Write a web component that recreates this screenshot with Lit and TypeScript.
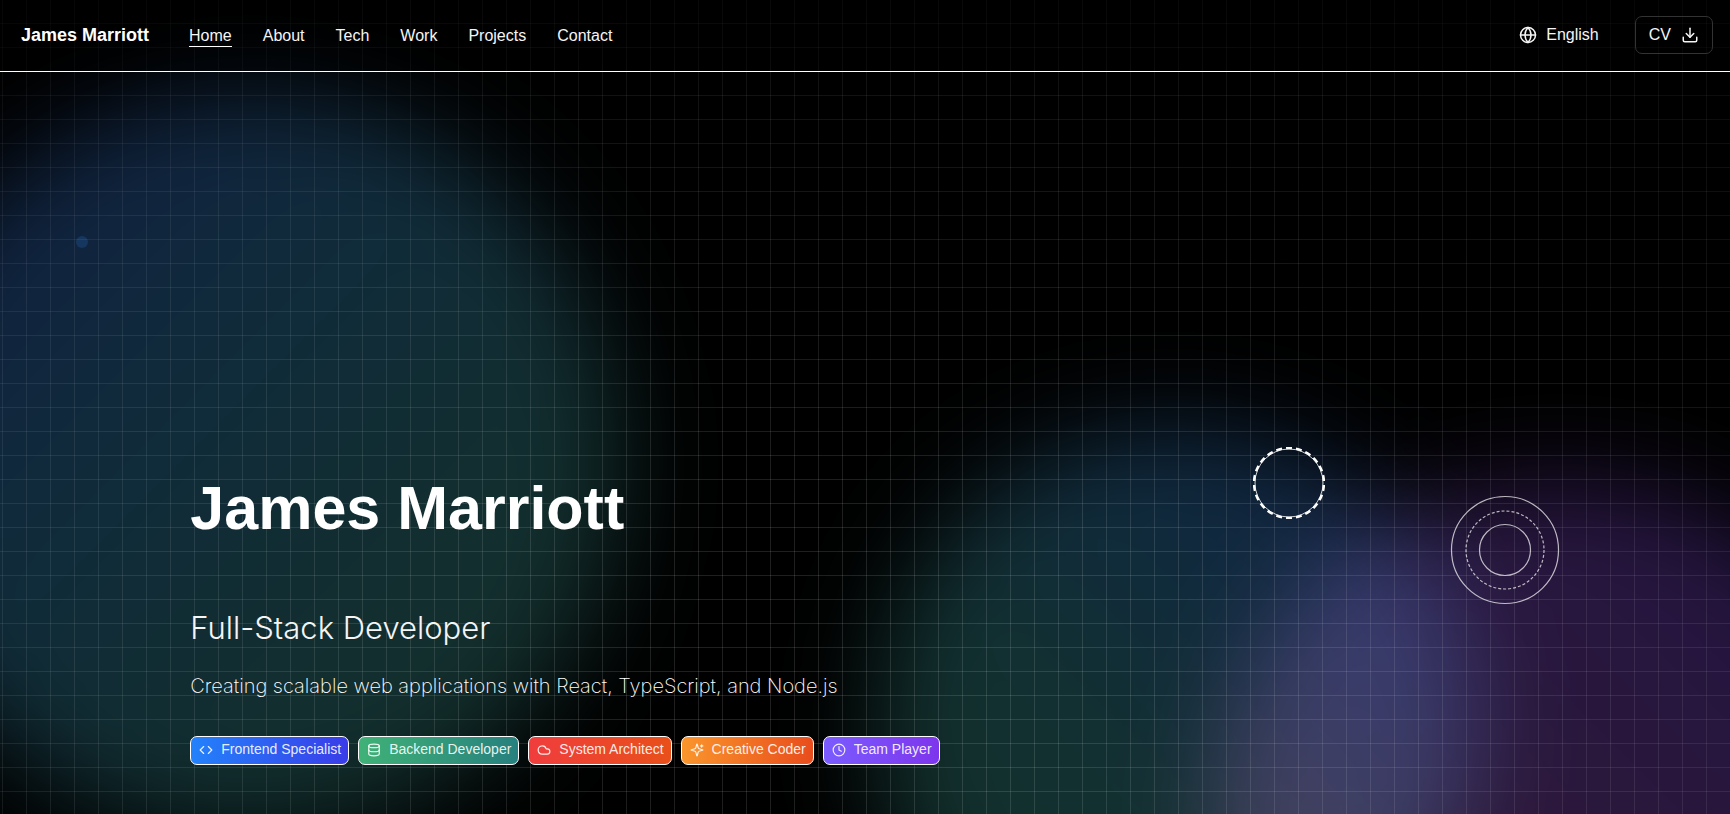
import { LitElement, html, css, svg } from "lit";
import { customElement, state } from "lit/decorators.js";

const icon = (body: unknown) => html`<svg class="icon" viewBox="0 0 24 24" aria-hidden="true">${body}</svg>`;

const icons = {
  globe: svg`<circle cx="12" cy="12" r="10"/><path d="M12 2a14.5 14.5 0 0 0 0 20 14.5 14.5 0 0 0 0-20"/><path d="M2 12h20"/>`,
  download: svg`<path d="M21 15v4a2 2 0 0 1-2 2H5a2 2 0 0 1-2-2v-4"/><path d="m7 10 5 5 5-5"/><path d="M12 15V3"/>`,
  code: svg`<path d="m16 18 6-6-6-6"/><path d="m8 6-6 6 6 6"/>`,
  database: svg`<ellipse cx="12" cy="5" rx="9" ry="3"/><path d="M3 5v14a9 3 0 0 0 18 0V5"/><path d="M3 12a9 3 0 0 0 18 0"/>`,
  cloud: svg`<path d="M17.5 19H9a7 7 0 1 1 6.71-9h1.79a4.5 4.5 0 1 1 0 9Z"/>`,
  sparkles: svg`<path d="M9.937 15.5A2 2 0 0 0 8.5 14.063l-6.135-1.582a.5.5 0 0 1 0-.962L8.5 9.936A2 2 0 0 0 9.937 8.5l1.582-6.135a.5.5 0 0 1 .963 0L14.063 8.5A2 2 0 0 0 15.5 9.937l6.135 1.581a.5.5 0 0 1 0 .964L15.5 14.063a2 2 0 0 0-1.437 1.437l-1.582 6.135a.5.5 0 0 1-.963 0z"/><path d="M20 3v4"/><path d="M22 5h-4"/>`,
  clock: svg`<circle cx="12" cy="12" r="10"/><path d="M12 6v6l4 2"/>`,
};

const links = ["Home", "About", "Tech", "Work", "Projects", "Contact"];

const tags = [
  { label: "Frontend Specialist", tone: "blue", glyph: icons.code },
  { label: "Backend Developer", tone: "green", glyph: icons.database },
  { label: "System Architect", tone: "red", glyph: icons.cloud },
  { label: "Creative Coder", tone: "orange", glyph: icons.sparkles },
  { label: "Team Player", tone: "violet", glyph: icons.clock },
];

@customElement("site-header")
class SiteHeader extends LitElement {
  @state() private current = "Home";

  static styles = css`
    :host { display: block; }
    .bar {
      display: flex;
      align-items: center;
      justify-content: space-between;
      padding: 16px 17px 17px 21px;
      border-bottom: 1px solid #fff;
      background: rgba(0, 0, 0, 0.35);
    }
    .group { display: flex; align-items: center; }
    .brand { color: #fff; font-size: 18px; font-weight: 700; line-height: 24px; text-decoration: none; margin-right: 40px; }
    .nav { display: flex; gap: 31px; padding-top: 2px; }
    .link { color: #f5f5f5; text-decoration: none; line-height: 20px; border-bottom: 1px solid transparent; }
    .link.on { border-bottom-color: #fff; }
    .btn {
      display: flex; align-items: center; gap: 9px;
      height: 38px; padding: 0 13px;
      border: 1px solid transparent; border-radius: 7px;
      background: none; color: #f5f5f5; font: inherit; line-height: 24px; cursor: pointer;
    }
    .btn.outline { border-color: #333; margin-left: 22px; gap: 10px; }
    .icon { width: 18px; height: 18px; fill: none; stroke: currentColor; stroke-width: 2; stroke-linecap: round; stroke-linejoin: round; }
  `;

  render() {
    return html`
      <header class="bar">
        <div class="group">
          <a class="brand" href="#home">James Marriott</a>
          <nav class="nav">
            ${links.map((l) => html`<a class="link ${l === this.current ? "on" : ""}" href="#${l.toLowerCase()}" @click=${() => (this.current = l)}>${l}</a>`)}
          </nav>
        </div>
        <div class="group">
          <button class="btn" type="button">${icon(icons.globe)}English</button>
          <button class="btn outline" type="button">CV${icon(icons.download)}</button>
        </div>
      </header>
    `;
  }
}

@customElement("app-root")
class AppRoot extends LitElement {
  static styles = css`
    :host {
      display: flex;
      flex-direction: column;
      position: relative;
      isolation: isolate;
      overflow: hidden;
      min-height: 100vh;
      background: #000;
      color: #fff;
      font-family: "Liberation Sans", Arial, Helvetica, sans-serif;
      font-size: 16px;
    }
    .backdrop, .grid { position: absolute; inset: 0; z-index: -1; pointer-events: none; }
    .blob { position: absolute; border-radius: 50%; filter: blur(48px); mix-blend-mode: screen; }
    .left { left: -124px; top: 92px; width: 744px; height: 744px; background: linear-gradient(135deg, #10233f 20%, #102b3a 42%, #122e2f 68%, #132f28); }
    .middle { left: 876px; top: 426px; width: 600px; height: 600px; background: linear-gradient(225deg, #112442 14%, #102a3c 36%, #123030 60%, #132f28); }
    .right { left: 1210px; top: 480px; width: 700px; height: 700px; background: linear-gradient(225deg, #221440 10%, #2a173c 46%, #371830 80%); }
    .dot { position: absolute; left: 76px; top: 236px; width: 12px; height: 12px; border-radius: 50%; background: #15365f; }
    .grid {
      background-image:
        linear-gradient(to right, rgba(255, 255, 255, 0.12) 1px, transparent 1px),
        linear-gradient(to bottom, rgba(255, 255, 255, 0.12) 1px, transparent 1px);
      background-size: 24px 24px;
      background-position: 2px 23px;
      mask-image: radial-gradient(ellipse 80% 90% at 50% 80%, #000 20%, rgba(0, 0, 0, 0.4) 100%);
    }
    .rings { position: absolute; fill: none; stroke: #fff; }
    .small { left: 1253px; top: 447px; width: 72px; height: 72px; }
    .large { left: 1450px; top: 495px; width: 110px; height: 110px; opacity: 0.7; }
    .hero { flex: 1; display: flex; flex-direction: column; justify-content: flex-end; padding: 0 11% 49px; }
    .name { margin: 0; font-size: 61px; line-height: 64px; font-weight: 700; }
    .role { margin: 68px 0 0; font-family: Inter, "Liberation Sans", sans-serif; font-size: 31px; line-height: 40px; font-weight: 300; color: #f5f5f5; }
    .intro { margin: 22px 0 0; font-family: Inter, "Liberation Sans", sans-serif; font-size: 20px; line-height: 32px; font-weight: 200; color: #fff; }
    .tags { display: flex; flex-wrap: wrap; gap: 9px; margin: 34px 0 0; padding: 0; list-style: none; }
    .tag { display: flex; align-items: center; gap: 8px; padding: 0 7px 2px 8px; border: 1px solid #fff; border-radius: 7px; font-size: 14px; line-height: 25px; color: rgba(255, 255, 255, 0.9); background-origin: border-box; }
    .icon { width: 14px; height: 14px; fill: none; stroke: currentColor; stroke-width: 2; stroke-linecap: round; stroke-linejoin: round; }
    .blue { background-image: linear-gradient(to right, #2382fb, #3a3ce8); }
    .green { background-image: linear-gradient(to right, #40b277, #27807e); }
    .red { background-image: linear-gradient(to right, #f03d3d, #e8501a); }
    .orange { background-image: linear-gradient(to right, #fa962c, #e84c1c); }
    .violet { background-image: linear-gradient(to right, #7a5cff, #7e35ec); }
  `;

  render() {
    return html`
      <div class="backdrop">
        <div class="blob left"></div>
        <div class="blob middle"></div>
        <div class="blob right"></div>
        <div class="dot"></div>
        <svg class="rings small" viewBox="0 0 72 72" aria-hidden="true">
          <circle cx="36" cy="36" r="34" stroke-width="1" opacity="0.8"/>
          <circle cx="36" cy="36" r="35" stroke-width="2.4" pathLength="220" stroke-dasharray="6 4" stroke-dashoffset="3" transform="rotate(-90 36 36)"/>
        </svg>
        <svg class="rings large" viewBox="0 0 110 110" stroke-width="1.2" aria-hidden="true">
          <circle cx="55" cy="55" r="53.5"/>
          <circle cx="55" cy="55" r="39" stroke-dasharray="3 2"/>
          <circle cx="55" cy="55" r="25.5"/>
        </svg>
      </div>
      <div class="grid"></div>
      <site-header></site-header>
      <main class="hero">
        <h1 class="name">James Marriott</h1>
        <p class="role">Full-Stack Developer</p>
        <p class="intro">Creating scalable web applications with React, TypeScript, and Node.js</p>
        <ul class="tags">
          ${tags.map((t) => html`<li class="tag ${t.tone}">${icon(t.glyph)}<span>${t.label}</span></li>`)}
        </ul>
      </main>
    `;
  }
}
